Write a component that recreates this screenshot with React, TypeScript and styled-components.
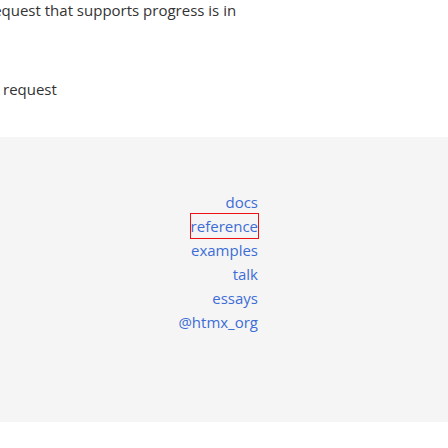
import styled, { createGlobalStyle } from "styled-components";

const GlobalStyle = createGlobalStyle`
  html, body {
    margin: 0;
    padding: 0;
    background: #ffffff;
    overflow: hidden;
  }
  body {
    font-family: "Open Sans", "Noto Sans", sans-serif;
    font-size: 15px;
    line-height: 24px;
    color: #333333;
  }
`;

const Page = styled.div`
  width: 448px;
  height: 448px;
  overflow: hidden;
  display: flex;
  flex-direction: column;
`;

const Content = styled.div`
  padding: 0 0 0 3px;
  height: 137px;
  flex-shrink: 0;
`;

const Paragraph = styled.p<{ $top?: number; $indent?: number }>`
  margin: ${(p) => p.$top ?? 0}px 0 0 0;
  text-indent: ${(p) => p.$indent ?? 0}px;
  white-space: nowrap;
`;

const Footer = styled.footer`
  background: #f5f5f5;
  height: 285px;
  flex-shrink: 0;
  display: flex;
  justify-content: flex-start;
  padding: 53px 0 0 0;
  box-sizing: border-box;
`;

const NavColumn = styled.nav`
  width: 258px;
  display: flex;
  flex-direction: column;
  align-items: flex-end;
`;

const NavLink = styled.a<{ $focused?: boolean }>`
  color: #3d6dd6;
  text-decoration: none;
  line-height: 24px;
  outline: ${(p) => (p.$focused ? "1px solid #ee1111" : "none")};
  outline-offset: 0;
`;

const links = ["docs", "reference", "examples", "talk", "essays", "@htmx_org"];

export default function App() {
  return (
    <Page>
      <GlobalStyle />
      <Content>
        <Paragraph $top={-2} $indent={-16}>
          request that supports progress is in
        </Paragraph>
        <Paragraph $top={55}>request</Paragraph>
      </Content>
      <Footer>
        <NavColumn>
          {links.map((l) => (
            <NavLink key={l} href="#" $focused={l === "reference"}>
              {l}
            </NavLink>
          ))}
        </NavColumn>
      </Footer>
    </Page>
  );
}
